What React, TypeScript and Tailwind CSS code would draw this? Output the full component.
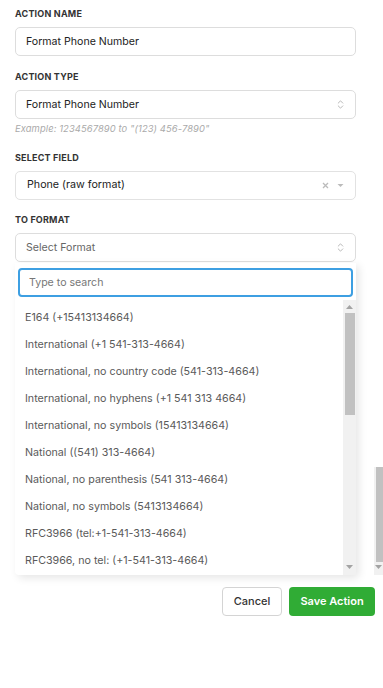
import { ChevronsUpDown } from 'lucide-react';

const FORMATS = [
  'E164 (+15413134664)',
  'International (+1 541-313-4664)',
  'International, no country code (541-313-4664)',
  'International, no hyphens (+1 541 313 4664)',
  'International, no symbols (15413134664)',
  'National ((541) 313-4664)',
  'National, no parenthesis (541 313-4664)',
  'National, no symbols (5413134664)',
  'RFC3966 (tel:+1-541-313-4664)',
  'RFC3966, no tel: (+1-541-313-4664)',
];

function Label({ children, className = '' }: { children: string; className?: string }) {
  return (
    <div className={`text-[9px] leading-[12px] font-bold tracking-[0.2px] text-[#333] mb-[7px] ${className}`}>
      {children}
    </div>
  );
}

export default function App() {
  return (
    <div
      className="relative w-[383px] h-[688px] bg-white overflow-hidden"
      style={{ fontFamily: 'Inter, "Liberation Sans", sans-serif' }}
    >
      <div className="w-[356px] pl-[15px] pt-[8px]">
        <Label>ACTION NAME</Label>
        <div className="h-[29px] border border-[#ddd] rounded-[5px] flex items-center px-[10px] text-[10.6px] text-[#222]">
          Format Phone Number
        </div>

        <Label className="mt-[15px]">ACTION TYPE</Label>
        <div className="h-[29px] border border-[#ddd] rounded-[5px] flex items-center justify-between pl-[10px] pr-[9px] text-[10.6px] text-[#222]">
          <span>Format Phone Number</span>
          <ChevronsUpDown size={11} strokeWidth={1.5} className="text-[#999]" />
        </div>
        <div className="mt-[4px] text-[9.4px] leading-[12px] italic text-[#aaa] tracking-[0.1px]">
          Example: 1234567890 to "(123) 456-7890"
        </div>

        <Label className="mt-[17px]">SELECT FIELD</Label>
        <div className="h-[29px] border border-[#e2e2e2] rounded-[5px] flex items-center justify-between pl-[11px] pr-[11px] text-[10.7px] text-[#222]">
          <span>Phone (raw format)</span>
          <div className="flex items-center gap-[8px] text-[#bbb]">
            <svg width="7" height="7" viewBox="0 0 7 7">
              <path d="M1 1l5 5M6 1l-5 5" stroke="currentColor" strokeWidth="1.3" />
            </svg>
            <svg width="7" height="5" viewBox="0 0 7 5">
              <path d="M0.5 1h6L3.5 4z" fill="currentColor" />
            </svg>
          </div>
        </div>

        <Label className="mt-[14px]">TO FORMAT</Label>
        <div className="h-[29px] border border-[#ddd] rounded-[5px] flex items-center justify-between pl-[10px] pr-[9px] text-[10.6px] text-[#666]">
          <span>Select Format</span>
          <ChevronsUpDown size={11} strokeWidth={1.5} className="text-[#999]" />
        </div>

        <div className="mt-[1px] bg-white rounded-b-[4px] shadow-[3px_3px_8px_rgba(0,0,0,0.1)] pt-[5px]">
          <div className="mx-[3px] h-[29px] border-2 border-[#3d9fe2] rounded-[4px] flex items-center px-[9px] text-[10.6px] text-[#777]">
            Type to search
          </div>
          <div className="mt-[3px] flex h-[275px]">
            <ul className="flex-1 pt-[5px]">
              {FORMATS.map(f => (
                <li key={f} className="h-[27px] flex items-center pl-[10px] text-[10.7px] text-[#5a5a5a]">
                  {f}
                </li>
              ))}
            </ul>
            <div className="w-[13px] bg-[#f1f1f1] flex flex-col items-center">
              <svg width="7" height="4" viewBox="0 0 7 4" className="mt-[5px] text-[#a3a3a3]">
                <path d="M0 4h7L3.5 0z" fill="currentColor" />
              </svg>
              <div className="mt-[4px] ml-[1px] w-[10px] h-[102px] bg-[#c1c1c1]" />
              <div className="flex-1" />
              <svg width="7" height="4" viewBox="0 0 7 4" className="mb-[6px] text-[#a3a3a3]">
                <path d="M0 0h7L3.5 4z" fill="currentColor" />
              </svg>
            </div>
          </div>
        </div>
      </div>

      <div className="mt-[12px] flex justify-end gap-[7px] pr-[8px]">
        <button className="w-[60px] h-[29px] border border-[#d4d4d4] rounded-[4px] text-[11px] font-medium text-[#333] bg-white">
          Cancel
        </button>
        <button className="w-[86px] h-[29px] rounded-[4px] text-[11px] font-semibold text-white bg-[#30ac35]">
          Save Action
        </button>
      </div>

      {/* page scrollbar peeking out beside the menu */}
      <div className="absolute left-[374px] top-[467px] w-[9px] h-[108px] bg-[#f1f1f1] flex flex-col">
        <div className="ml-[2px] w-[7px] h-[95px] bg-[#c1c1c1]" />
        <div className="flex-1" />
        <svg width="7" height="4" viewBox="0 0 7 4" className="ml-[1px] mb-[6px] text-[#a3a3a3]">
          <path d="M0 0h7L3.5 4z" fill="currentColor" />
        </svg>
      </div>
    </div>
  );
}
